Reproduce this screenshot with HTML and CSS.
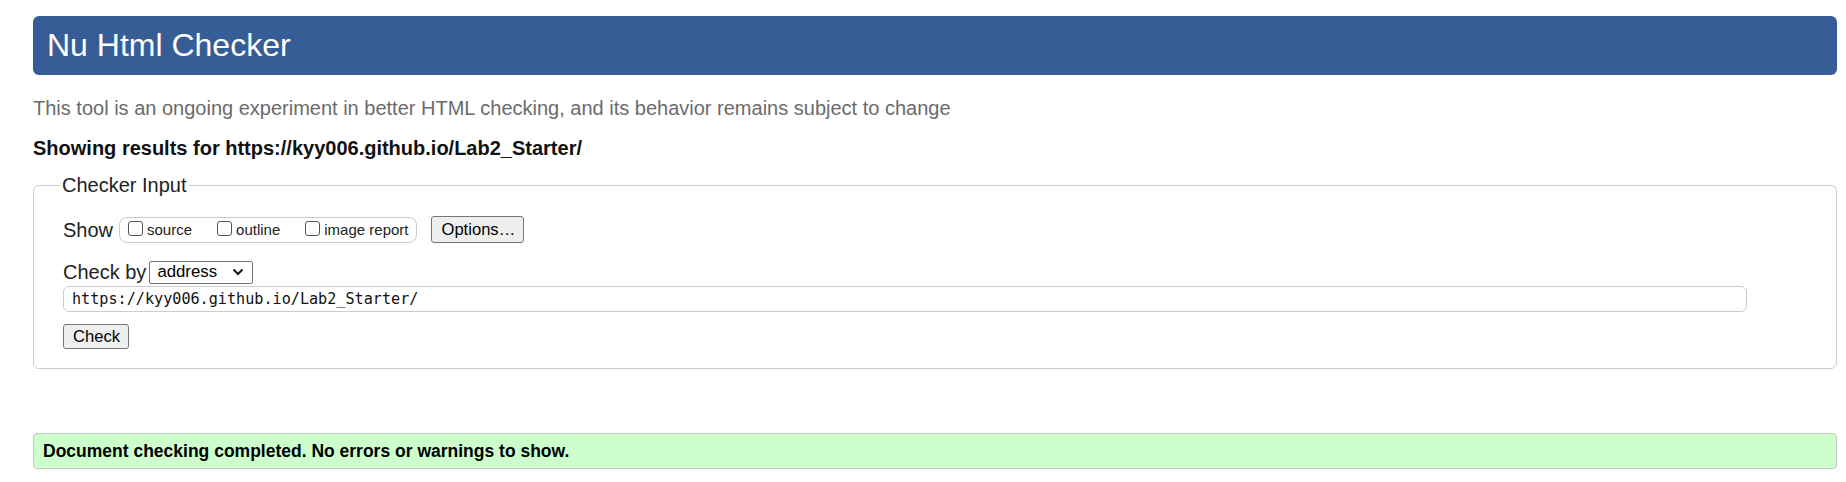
FILE: index.html
```html
<!DOCTYPE html>
<html lang="en">
<head>
<meta charset="utf-8">
<title>Showing results for https://kyy006.github.io/Lab2_Starter/ - Nu Html Checker</title>
<link rel="stylesheet" href="styles.css">
</head>
<body>
<h1 class="title">Nu Html Checker</h1>
<p class="intro">This tool is an ongoing experiment in better HTML checking, and its behavior remains subject to change</p>
<p class="showing">Showing results for https://kyy006.github.io/Lab2_Starter/</p>
<fieldset class="input-box">
  <legend class="input-legend">Checker Input</legend>
  <div class="row show-row">
    <span class="row-label">Show</span>
    <div class="show-group">
      <label class="opt"><span class="box"></span>source</label>
      <label class="opt"><span class="box"></span>outline</label>
      <label class="opt"><span class="box"></span>image report</label>
    </div>
    <button class="btn options-btn" type="button">Options…</button>
  </div>
  <div class="row by-row">
    <span class="row-label">Check by</span>
    <div class="select">
      <span class="select-text">address</span>
      <svg class="chev" width="12" height="8" viewBox="0 0 12 8"><path d="M1.5 1.5 L6 6 L10.5 1.5" fill="none" stroke="#111" stroke-width="2"/></svg>
    </div>
  </div>
  <div class="url">https://kyy006.github.io/Lab2_Starter/</div>
  <div class="row check-row">
    <button class="btn check-btn" type="button">Check</button>
  </div>
</fieldset>
<div class="result">Document checking completed. No errors or warnings to show.</div>
</body>
</html>
```
FILE: styles.css
```css
* { box-sizing: border-box; }
html, body { background: #fff; }
body {
  margin: 0;
  padding: 16px 9px 0 33px;
  font-family: "Liberation Sans", Arial, sans-serif;
  font-size: 20px;
  color: #111;
}
.title {
  margin: 0;
  height: 59px;
  line-height: 59px;
  padding-left: 14px;
  background: #365d95;
  color: #fff;
  font-size: 32px;
  font-weight: normal;
  border-radius: 6px;
}
.intro {
  margin: 21px 0 0;
  line-height: 24px;
  color: #6b6b6b;
}
.showing {
  margin: 16px 0 0;
  line-height: 24px;
  font-weight: bold;
  color: #111;
}
.input-box {
  margin: 13px 0 0;
  padding: 19px 24px 19px 29px;
  border: 1px solid #ccc;
  border-radius: 6px;
  min-width: 0;
}
.input-legend {
  padding: 0 2px;
  margin-left: -3px;
  line-height: 24px;
  font-size: 20px;
  color: #222;
}
.row {
  display: flex;
  align-items: center;
}
.row-label {
  color: #222;
  line-height: 24px;
}
.show-row { height: 27px; }
.show-group {
  display: flex;
  align-items: center;
  height: 26px;
  margin-left: 6px;
  padding: 0 8px 0 8px;
  border: 1px solid #ccc;
  border-radius: 8px;
  font-size: 15px;
  gap: 25px;
}
.opt {
  display: flex;
  align-items: center;
  gap: 4px;
  color: #222;
}
.box {
  width: 15px;
  height: 15px;
  border: 1px solid #555;
  border-radius: 3px;
  background: #fff;
  margin-top: -2px;
}
.btn {
  font-family: "Liberation Sans", Arial, sans-serif;
  font-size: 16.6px;
  color: #000;
  background: #efefef;
  border: 1px solid #767676;
  border-radius: 3px;
  padding: 0 9px;
  margin: 0;
}
.options-btn {
  margin-left: 14px;
  height: 27px;
  width: 93px;
}
.by-row {
  margin-top: 18px;
  height: 22px;
}
.select {
  display: flex;
  align-items: center;
  justify-content: space-between;
  margin-left: 3px;
  width: 104px;
  height: 23px;
  padding: 0 8px 0 7px;
  border: 1px solid #767676;
  border-radius: 2px;
  font-size: 16.8px;
  color: #000;
}
.url {
  margin: 3px 65px 0 0;
  height: 26px;
  line-height: 24px;
  padding-left: 8px;
  border: 1px solid #ccc;
  border-radius: 6px;
  font-family: "DejaVu Sans Mono", "Liberation Mono", monospace;
  font-size: 15.15px;
  color: #111;
}
.check-row { margin-top: 12px; }
.check-btn {
  height: 25px;
  width: 66px;
}
.result {
  margin-top: 64px;
  height: 36px;
  line-height: 34px;
  padding-left: 9px;
  background: #ccffcc;
  border: 1px solid #c6c6c6;
  border-radius: 4px;
  font-size: 17.5px;
  font-weight: bold;
  color: #000;
}
```
